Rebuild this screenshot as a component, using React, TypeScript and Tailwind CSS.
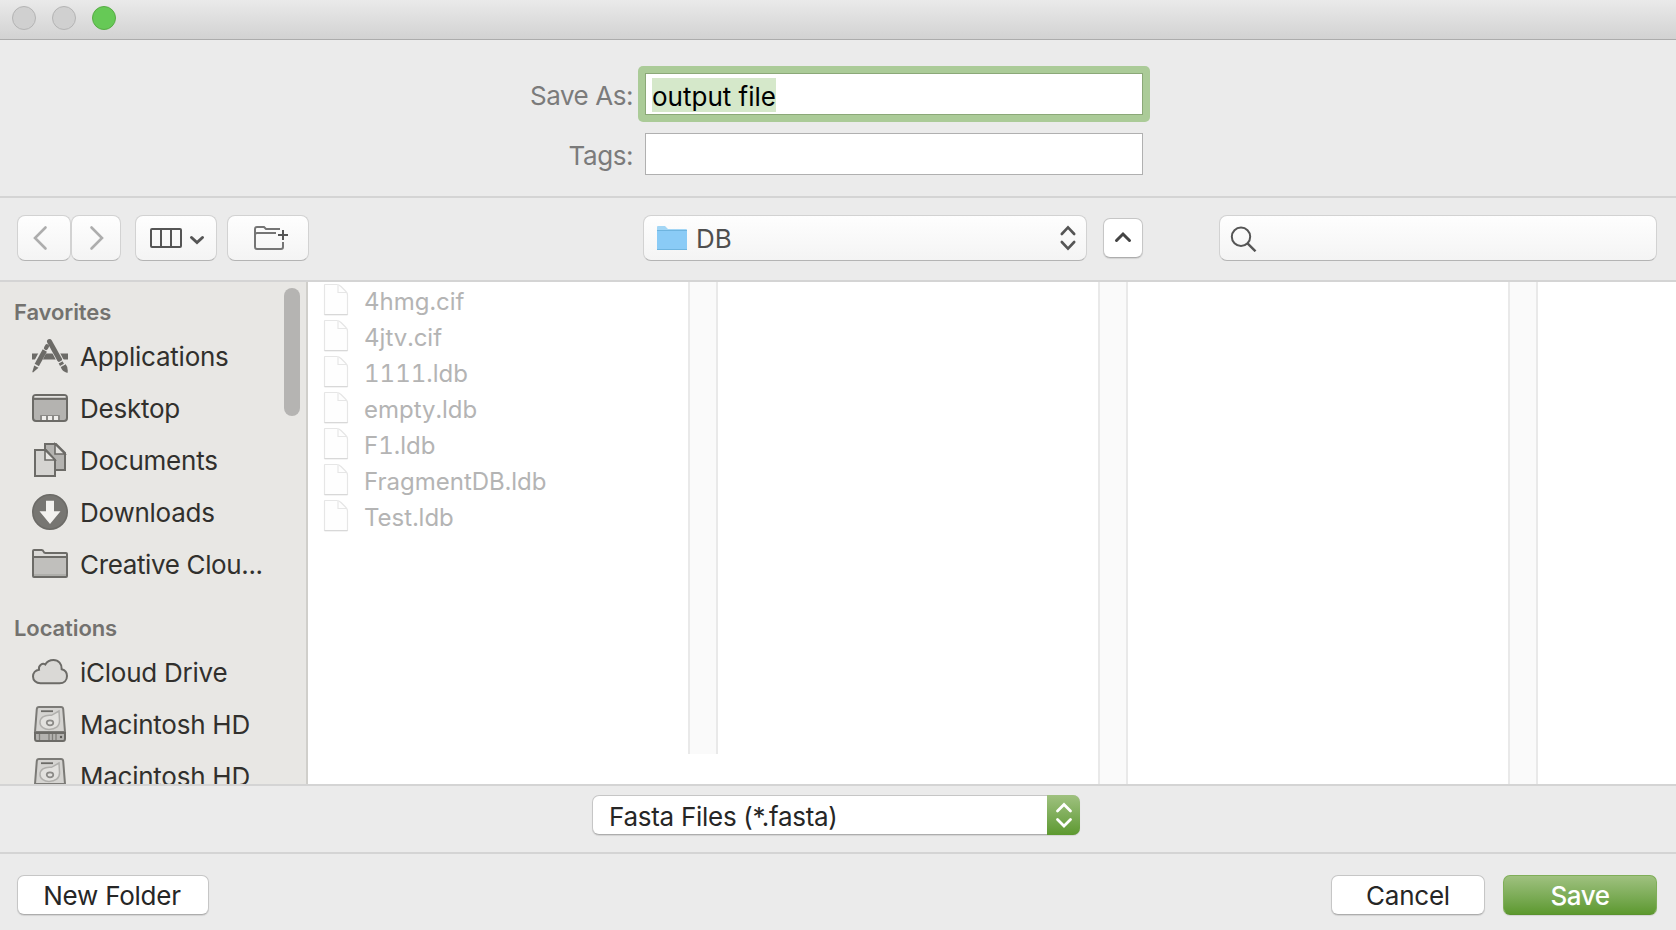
import React from "react";

type IconProps = { children: React.ReactNode };

function SideIcon({ children }: IconProps) {
  return (
    <svg width="36" height="36" viewBox="0 0 36 36" fill="none" stroke="#6c6b67" strokeWidth="2" className="mb-0.5 shrink-0">
      {children}
    </svg>
  );
}

const icons: Record<string, React.ReactNode> = {
  apps: (
    <>
      <path d="M0 18.500H36" strokeWidth="6" />
      <path d="M15.500 5L0.500 34M18 3L33 32" stroke="#e8e7e4" strokeWidth="7" />
      <path d="M12.8 12.500L4.800 27" strokeWidth="4.800" />
      <path d="M14 10L15 8.300" strokeWidth="4.200" strokeLinecap="round" />
      <path d="M2.2 27.5L6.5 29.8L1 34.5L0.3 34Z" fill="#6c6b67" stroke="none" />
      <path d="M17.5 3.500L27.500 21.500" strokeWidth="5" strokeLinecap="round" />
      <path d="M28.6 24.3L30 26.8" strokeWidth="4.5" />
      <path d="M28.500 28.5L33.5 26Q36.500 29.5 35.500 35Q30 33.5 28.500 28.5Z" fill="#6c6b67" stroke="none" />
      <path d="M26 25L31.500 22M28 29L33.500 26" stroke="#e8e7e4" strokeWidth="0.9" />
    </>
  ),
  desktop: (
    <>
      <rect x="1" y="5" width="34" height="26" rx="3" fill="#b4b3b0" />
      <path d="M2.500 6.8H33.500" stroke="#e4e3e0" strokeWidth="1.6" />
      <path d="M2 8.9H34" />
      <path d="M8.500 30V25.500H27.500V30" fill="#8b8a87" stroke="#8b8a87" strokeWidth="1" />
      <path d="M10 28H14M16 28H20M22 28H26" stroke="#efeeeb" strokeWidth="4" />
    </>
  ),
  documents: (
    <>
      <path d="M13 2H24L33 11V28H13Z" fill="#b4b3b0" />
      <path d="M23 2V12H33Z" fill="#e4e3e0" strokeWidth="1.6" />
      <path d="M3 8H14L23 18V34H3Z" fill="#d5d4d1" />
      <path d="M13 8V18H23Z" fill="#e8e7e4" strokeWidth="1.6" />
    </>
  ),
  downloads: (
    <>
      <circle cx="18" cy="18" r="17.2" fill="#777672" strokeWidth="1.6" />
      <path d="M14 6.8H22V17.3H28.5L18 30L7.5 17.3H14Z" fill="#f3f2ef" stroke="none" />
    </>
  ),
  folder: (
    <>
      <path d="M1 30V5Q1 4 2 4H9.5Q11 4 11.5 5.5Q12 7 13.5 7H34Q35 7 35 8V30Q35 31 34 31H2Q1 31 1 30Z" fill="#dcdbd8" />
      <path d="M2 11H34V30H2Z" fill="#c0bfbc" stroke="none" />
      <path d="M2 29H34" stroke="#a9a8a5" strokeWidth="1.5" />
      <path d="M1 11H35" />
    </>
  ),
  cloud: (
    <path d="M8.5 29.3C4 29.3 1 26.300 1 22.5C1 19 3.5 16.2 7 15.7C6.2 11.5 10.5 8.5 13.3 10.5C15 7.5 18 6 21.5 6C26.5 6 30 10 29.7 15.2C33 16 35 19 35 22C35 26.300 32 29.300 27.5 29.300Z" fill="#dad9d6" />
  ),
  disk: (
    <>
      <path d="M7 1H29Q31 1 31.200 3L33 26H3L4.800 3Q5 1 7 1Z" fill="#d5d4d1" stroke="#7b7a76" />
      <path d="M3 27H33V32.500Q33 35 31 35H5Q3 35 3 32.500Z" fill="#b4b3b0" />
      <path d="M9 5.2H21" strokeWidth="1.8" />
      <path d="M27 5L19.5 9.3C12 8.5 8 12 8 16.5C8 21 12.5 23.5 17 23.5C23 23.5 28 20.5 27.5 14Z" fill="#e2e1de" stroke="#b0afac" strokeWidth="1.5" />
      <ellipse cx="18" cy="16.8" rx="3.3" ry="2.500" stroke="#8b8a87" strokeWidth="1.7" />
      <path d="M7.5 28V34M17 28V34M20.5 28V34M24 28V34" stroke="#7e7d79" strokeWidth="1.3" />
      <circle cx="29" cy="31" r="1.2" fill="#5a5955" stroke="none" />
    </>
  ),
};

function SideRow({ icon, label }: { icon: string; label: string }) {
  const tracking = label.endsWith("...") ? "tracking-[-0.36px]" : "tracking-[-0.25px]";
  return (
    <div className="flex h-[52px] shrink-0 items-center gap-3 pl-8">
      <SideIcon>{icons[icon]}</SideIcon>
      <span className={`${tracking} text-[26px] whitespace-nowrap text-[#31302d]`}>{label}</span>
    </div>
  );
}

const favorites = [
  ["apps", "Applications"],
  ["desktop", "Desktop"],
  ["documents", "Documents"],
  ["downloads", "Downloads"],
  ["folder", "Creative Clou..."],
];
const locations = [
  ["cloud", "iCloud Drive"],
  ["disk", "Macintosh HD"],
  ["disk", "Macintosh HD"],
];
const files = ["4hmg.cif", "4jtv.cif", "1111.ldb", "empty.ldb", "F1.ldb", "FragmentDB.ldb", "Test.ldb"];

const bezel =
  "flex items-center rounded-[8px] border border-[#d2d2d2] border-b-[#b4b4b4] bg-linear-to-b from-[#fefefe] to-[#f4f4f4]";
const push =
  "flex h-10 items-center justify-center rounded-[7px] border border-[#c6c6c6] border-b-[#adadad] bg-white pt-0.5 text-[26px] tracking-[-0.25px] text-[#262626] shadow-[0_1px_1px_rgba(0,0,0,0.1)]";

function FileIcon() {
  return (
    <svg width="26" height="34" viewBox="0 0 26 34" fill="none" stroke="#e6e6e6" strokeWidth="1.2">
      <path d="M1.5 2Q1.5 1.500 2 1.5H13.5Q16 1.500 18 3.500L22.500 8Q24.500 10 24.5 12V31.5H1.5Z" fill="#fefefe" />
      <path d="M15 2.300V9.5H23.500" />
      <path d="M1.5 31.7H24.5" stroke="#d6d6d6" />
    </svg>
  );
}

function Gutter({ short = false }: { short?: boolean }) {
  return (
    <div className={`${short ? "h-[472px]" : "h-full"} w-[30px] shrink-0 border-x-2 border-[#e9e9e9] bg-[#fafafa]`} />
  );
}

export default function App() {
  return (
    <div className="flex h-[930px] w-[1676px] flex-col overflow-hidden bg-[#ebebeb] font-['Inter',sans-serif] leading-none">
      <header className="flex h-10 shrink-0 items-start gap-4 border-b border-[#acacac] bg-linear-to-b from-[#eaeaea] to-[#d2d2d2] pt-1.5 pl-3">
        <span className="size-6 rounded-full border border-[#b4b4b4] bg-[#d0d0d0]" />
        <span className="size-6 rounded-full border border-[#b4b4b4] bg-[#d0d0d0]" />
        <span className="size-6 rounded-full border border-[#57ac45] bg-[#66c956]" />
      </header>

      <section className="flex h-[158px] shrink-0 flex-col border-b-2 border-[#d4d4d4] pt-[33px] text-[26px]">
        <div className="flex h-[42px] items-center">
          <label className="w-[633px] pt-[3px] text-right tracking-[-0.45px] text-[#7b7b7b]">Save As:</label>
          <div className="ml-[5px] h-14 w-[512px] shrink-0 rounded-[5px] bg-[#abcb98] p-[7px]">
            <div className="flex h-full items-center border border-[#8ba878] bg-white pl-1.5">
              <span className="mt-px flex h-[34px] items-center bg-[#d5e8ca] pt-[5px] text-black">output file</span>
            </div>
          </div>
        </div>
        <div className="mt-[18px] flex h-[42px] items-center">
          <label className="w-[633px] pt-1 text-right tracking-[-0.45px] text-[#7b7b7b]">Tags:</label>
          <div className="ml-3 h-[42px] w-[498px] border border-[#b0b0b0] bg-white" />
        </div>
      </section>

      <section className="flex h-[84px] shrink-0 items-start border-b-2 border-[#d4d4d4] pt-[17px] pl-[17px]">
        <div className={`${bezel} h-[46px] w-[54px] justify-center pr-1.5`}>
          <svg width="16" height="26" viewBox="0 0 16 26" fill="none" stroke="#adadad" strokeWidth="2.600" strokeLinecap="round"><path d="M12.500 2.500L2 13L12.500 23.500" /></svg>
        </div>
        <div className={`${bezel} h-[46px] w-[50px] justify-center`}>
          <svg width="16" height="26" viewBox="0 0 16 26" fill="none" stroke="#adadad" strokeWidth="2.600" strokeLinecap="round"><path d="M3.500 2.500L14 13L3.500 23.500" /></svg>
        </div>
        <div className={`${bezel} ml-3.5 h-[46px] w-[82px] pl-[14px]`}>
          <svg width="56" height="22" viewBox="0 0 56 22" fill="none" stroke="#555" strokeWidth="2">
            <rect x="1" y="2" width="30" height="18" rx="1" />
            <path d="M11 2V20M21 2V20" />
            <path d="M41.5 10.500L47 15.500L52.5 10.500" strokeWidth="3" strokeLinecap="round" />
          </svg>
        </div>
        <div className={`${bezel} ml-2.5 h-[46px] w-[82px] pl-[26px]`}>
          <svg width="36" height="28" viewBox="0 0 36 28" fill="none" stroke="#757575" strokeWidth="2">
            <path d="M26 5H12L10 3H3Q1 3 1 5V23Q1 25 3 25H27Q29 25 29 23V18M1 11Q1 9 3 9H22" />
            <path d="M29 6V16M24 11H34" stroke="#555" />
          </svg>
        </div>
        <div className={`${bezel} ml-[334px] h-[46px] w-[444px] pr-[9px] pl-3`}>
          <svg width="32" height="28" viewBox="0 0 32 28" fill="none">
            <path d="M1 3Q1 2 2 2H9L12 5H30Q31 5 31 6V25H1Z" fill="#a3d6f5" />
            <path d="M1 7H31V26H1Z" fill="#8acbf6" />
            <path d="M1 6.500H31M1 25.500H31" stroke="#6eb4df" />
          </svg>
          <span className="ml-2 pt-0.5 text-[26px] text-[#4f4f4f]">DB</span>
          <svg className="ml-auto" width="18" height="28" viewBox="0 0 18 28" fill="none" stroke="#555" strokeWidth="2.600" strokeLinecap="round"><path d="M2.800 10L9 3.300L15.200 10M2.800 18L9 24.700L15.200 18" /></svg>
        </div>
        <div className="mt-[3px] ml-4 flex h-10 w-10 items-center justify-center rounded-[7px] border border-[#c6c6c6] border-b-[#adadad] bg-white pb-0.5 shadow-[0_1px_1px_rgba(0,0,0,0.1)]">
          <svg width="18" height="12" viewBox="0 0 18 12" fill="none" stroke="#444" strokeWidth="3" strokeLinecap="round"><path d="M2.500 9.500L9 3L15.500 9.500" /></svg>
        </div>
        <div className={`${bezel} ml-[76px] h-[46px] w-[438px] pl-2.5`}>
          <svg width="28" height="28" viewBox="0 0 28 28" fill="none" stroke="#555" strokeWidth="2"><circle cx="11" cy="12.800" r="9.200" /><path d="M17.500 19.300L25.500 27.300" strokeWidth="2.400" /></svg>
        </div>
      </section>

      <main className="flex h-[502px] shrink-0 overflow-hidden bg-white">
        <aside className="relative flex w-[308px] shrink-0 flex-col overflow-hidden border-r-2 border-[#d0cfcb] bg-[#e8e7e4]">
          <h2 className="flex h-[49px] shrink-0 items-center pt-[11px] pl-3.5 text-[22px] font-semibold tracking-[-0.1px] text-[#73726f]">Favorites</h2>
          {favorites.map(([icon, label]) => <SideRow key={label} icon={icon} label={label} />)}
          <h2 className="flex h-14 shrink-0 items-center pt-[18px] pl-3.5 text-[22px] font-semibold tracking-[-0.1px] text-[#73726f]">Locations</h2>
          {locations.map(([icon, label], i) => <SideRow key={i} icon={icon} label={label} />)}
          <div className="absolute top-1.5 right-1.5 h-32 w-4 rounded-full bg-[#b5b4b2]" />
        </aside>
        <ul className="w-[380px] shrink-0 text-[24px] text-[#b4b4b4] tabular-nums">
          {files.map((name) => (
            <li key={name} className="flex h-9 items-center gap-[15px] pl-[15px]">
              <FileIcon />
              <span className="pt-1">{name}</span>
            </li>
          ))}
        </ul>
        <Gutter short />
        <div className="w-[380px] shrink-0" />
        <Gutter />
        <div className="w-[380px] shrink-0" />
        <Gutter />
      </main>

      <section className="flex h-[70px] shrink-0 justify-center border-y-2 border-[#d4d4d4] pt-[9px] pr-1">
        <div className="flex h-10 w-[488px] rounded-[7px] border border-[#c6c6c6] border-b-[#adadad] bg-white shadow-[0_1px_1px_rgba(0,0,0,0.1)]">
          <span className="flex flex-1 items-center pt-[3px] pl-4 text-[26px] tracking-[-0.28px] text-[#262626]">Fasta Files (*.fasta)</span>
          <span className="-my-px -mr-px flex w-[33px] items-center justify-center rounded-r-[7px] bg-linear-to-b from-[#9fc17f] to-[#5d992e]">
            <svg width="18" height="26" viewBox="0 0 18 26" fill="none" stroke="#fff" strokeWidth="2.800" strokeLinecap="round"><path d="M2.500 9L9 2.500L15.500 9M2.500 17.500L9 24L15.500 17.500" /></svg>
          </span>
        </div>
      </section>

      <footer className="flex flex-1 items-start pt-[21px] pr-[19px] pl-[17px]">
        <button className={`${push} w-48 pr-0.5`}>New Folder</button>
        <button className={`${push} ml-auto w-[154px]`}>Cancel</button>
        <button className="ml-[18px] flex h-10 w-[154px] items-center justify-center rounded-[7px] border border-[#7fae58] border-b-[#5a922e] bg-linear-to-b from-[#9fc17f] to-[#5d992e] pt-0.5 text-[26px] font-medium tracking-[-0.5px] text-white shadow-[0_1px_1px_rgba(0,0,0,0.1)]">Save</button>
      </footer>
    </div>
  );
}
